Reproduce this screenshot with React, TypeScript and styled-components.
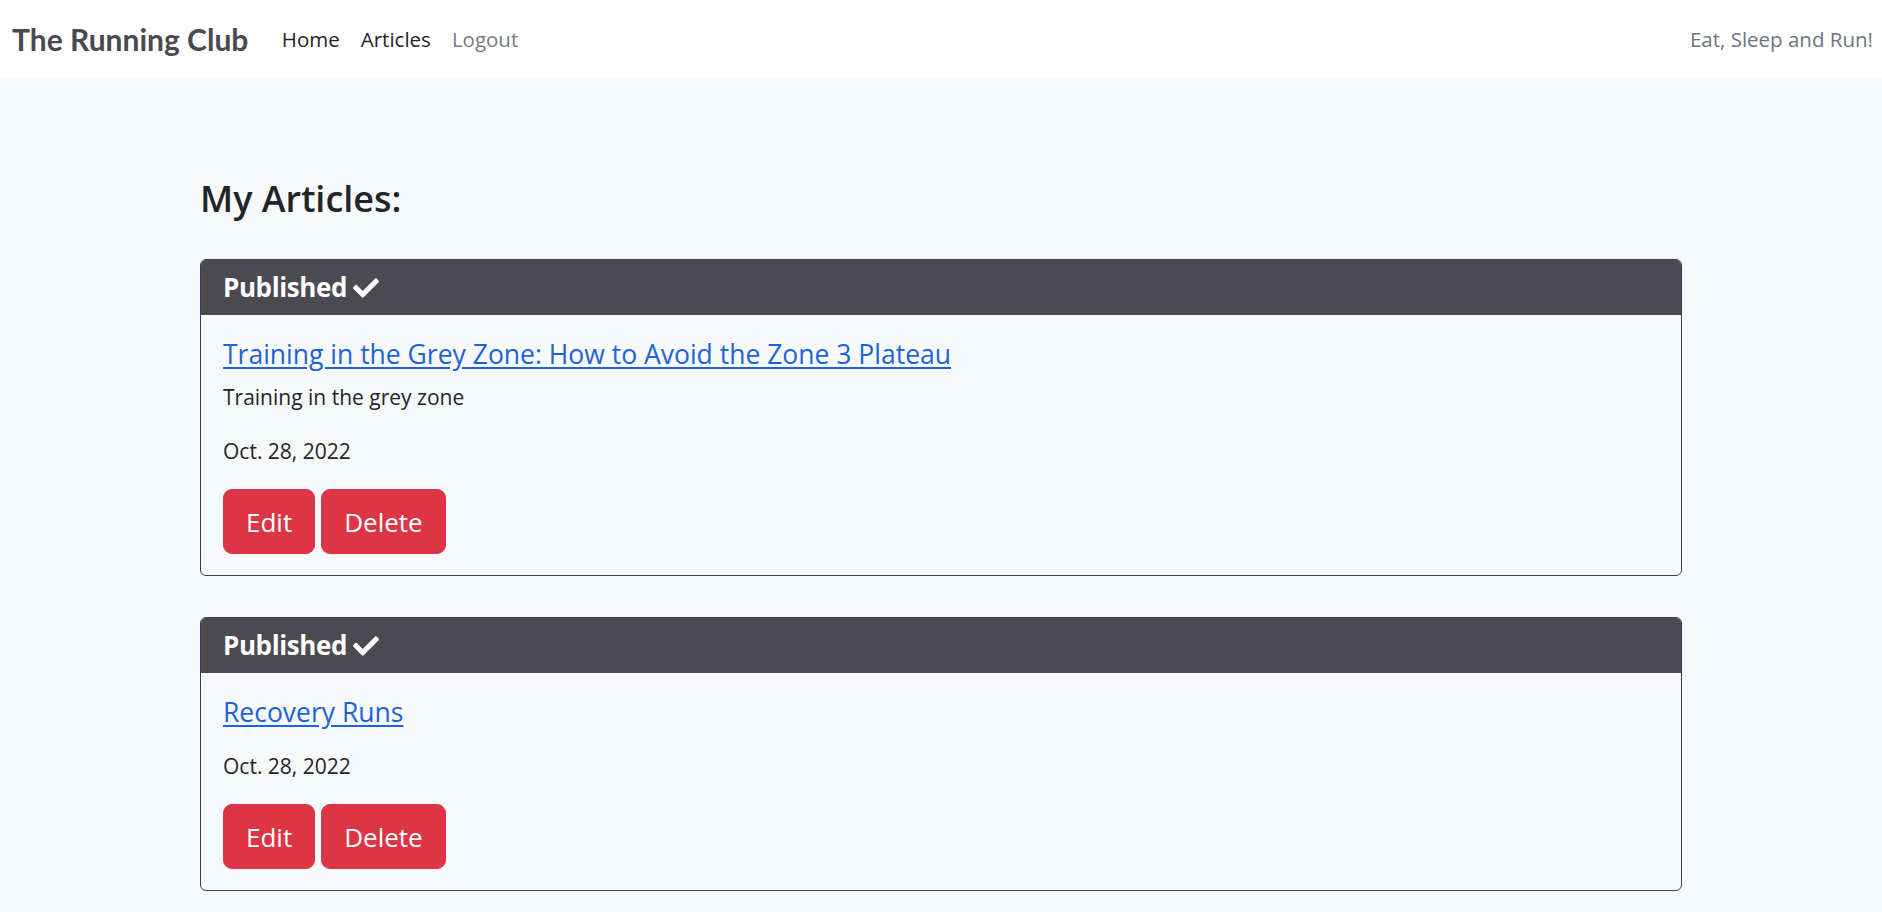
import React from "react";
import styled, { createGlobalStyle } from "styled-components";
import { FaCheck } from "react-icons/fa";

const GlobalStyle = createGlobalStyle`
  html, body {
    margin: 0;
    padding: 0;
    background: #f8f9fa;
    font-family: "Open Sans", "Noto Sans", sans-serif;
    color: #212529;
  }
  * { box-sizing: border-box; }
`;

const NavBar = styled.nav`
  display: flex;
  align-items: center;
  justify-content: space-between;
  height: 78px;
  padding: 0 9px 0 12px;
  background: #ffffff;
`;

const NavLeft = styled.div`
  display: flex;
  align-items: center;
`;

const Brand = styled.a`
  font-family: Lato, sans-serif;
  font-weight: 700;
  font-size: 30px;
  color: #4a4950;
  text-decoration: none;
  margin-right: 23px;
`;

const NavLink = styled.a<{ $muted?: boolean }>`
  font-size: 20.5px;
  padding: 0 10.5px;
  color: ${(p) => (p.$muted ? "#777b80" : "#212529")};
  text-decoration: none;
`;

const Tagline = styled.span`
  font-size: 20.5px;
  color: #6c757d;
`;

const Main = styled.main`
  width: 1482px;
  margin: 0 auto;
  padding-top: 97px;
`;

const Heading = styled.h3`
  font-size: 36px;
  font-weight: 600;
  line-height: 47px;
  margin: 0 0 37px;
`;

const Card = styled.section`
  border: 1px solid #363b6c;
  border-radius: 6px;
  overflow: hidden;
  margin-bottom: 41px;
  background: #f8f9fa;
`;

const CardHeader = styled.h5`
  margin: 0;
  background: #4b4a51;
  color: #ffffff;
  font-size: 26px;
  font-weight: 700;
  letter-spacing: -0.4px;
  line-height: 33px;
  padding: 11px 22px;
  display: flex;
  align-items: center;
  gap: 6px;
`;

const CardBody = styled.div`
  padding: 23px 22px 21px;
`;

const Title = styled.h5`
  font-size: 26.5px;
  font-weight: 500;
  line-height: 33px;
  margin: 0 0 10px;
`;

const TitleLink = styled.a`
  color: #1c64d6;
  text-decoration: underline;
  text-underline-offset: 3px;
`;

const Text = styled.p`
  font-size: 21px;
  line-height: 33px;
  margin: 0 0 21px;
`;

const Actions = styled.div`
  display: flex;
  gap: 6px;
`;

const DangerButton = styled.button`
  font-family: inherit;
  font-size: 26px;
  line-height: 38px;
  height: 65px;
  padding: 0 22px;
  color: #ffffff;
  background: #dc3545;
  border: 1px solid #dc3545;
  border-radius: 9px;
`;

type Article = { title: string; description: string; date: string };

const articles: Article[] = [
  {
    title: "Training in the Grey Zone: How to Avoid the Zone 3 Plateau",
    description: "Training in the grey zone",
    date: "Oct. 28, 2022",
  },
  { title: "Recovery Runs", description: "", date: "Oct. 28, 2022" },
];

export default function App() {
  return (
    <>
      <GlobalStyle />
      <NavBar>
        <NavLeft>
          <Brand href="#">The Running Club</Brand>
          <NavLink href="#">Home</NavLink>
          <NavLink href="#">Articles</NavLink>
          <NavLink href="#" $muted>
            Logout
          </NavLink>
        </NavLeft>
        <Tagline>Eat, Sleep and Run!</Tagline>
      </NavBar>
      <Main>
        <Heading>My Articles:</Heading>
        {articles.map((a, i) => (
          <Card key={i}>
            <CardHeader>
              Published <FaCheck size={26} />
            </CardHeader>
            <CardBody>
              <Title>
                <TitleLink href="#">{a.title}</TitleLink>
              </Title>
              <Text>{a.description}</Text>
              <Text>{a.date}</Text>
              <Actions>
                <DangerButton>Edit</DangerButton>
                <DangerButton>Delete</DangerButton>
              </Actions>
            </CardBody>
          </Card>
        ))}
      </Main>
    </>
  );
}
